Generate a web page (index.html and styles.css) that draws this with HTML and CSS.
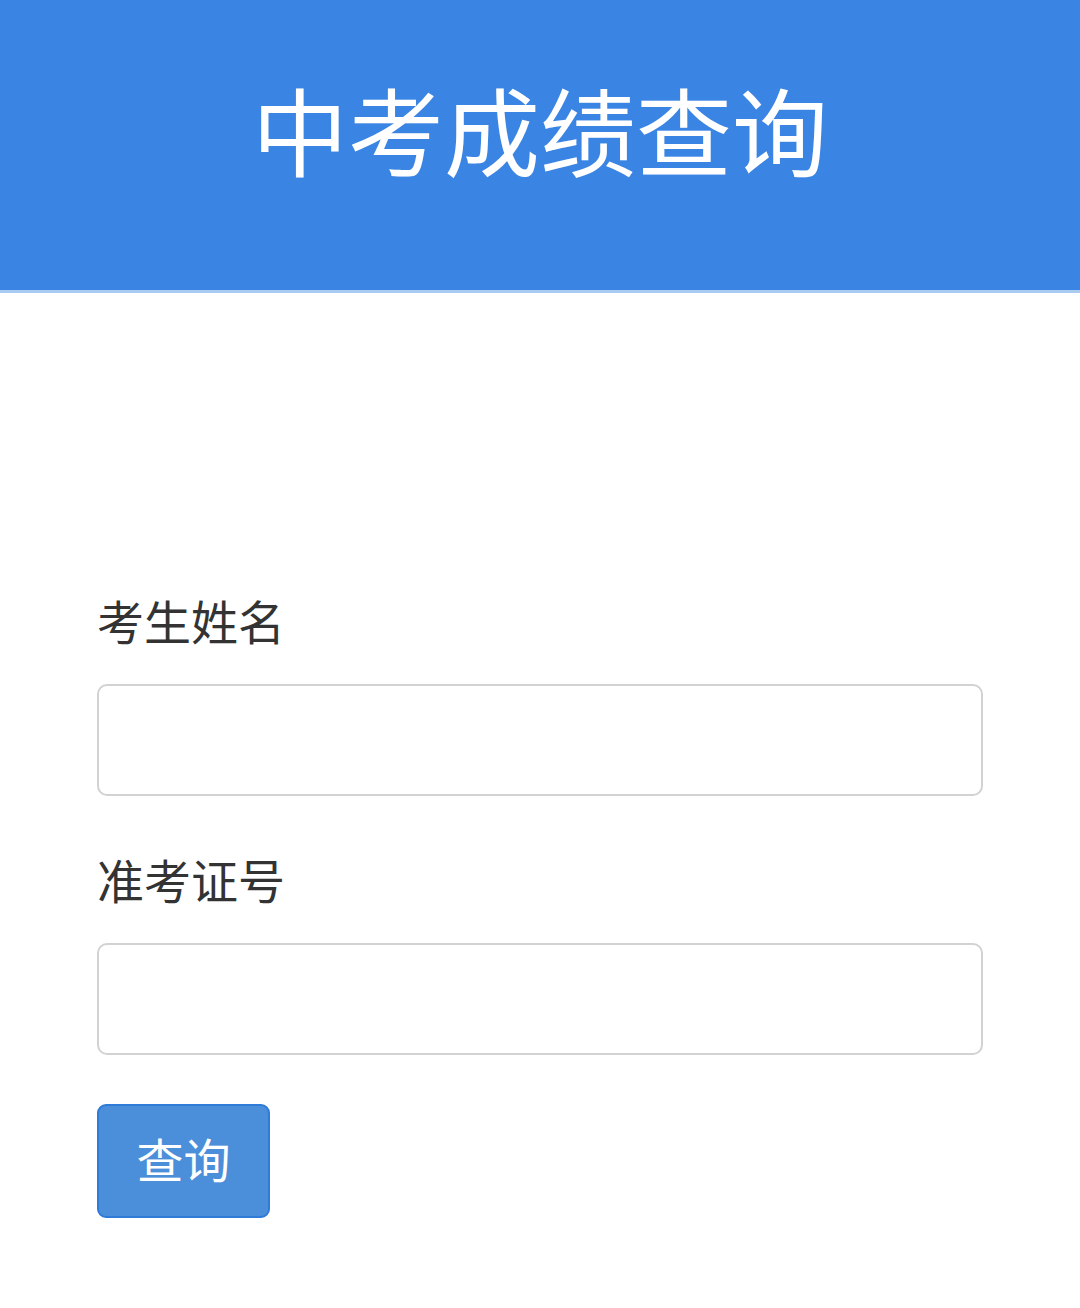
FILE: index.html
```html
<!DOCTYPE html>
<html lang="zh-CN">
<head>
<meta charset="utf-8">
<title>中考成绩查询</title>
<link rel="stylesheet" href="styles.css">
</head>
<body>
<header class="header">
  <h1 class="title">中考成绩查询</h1>
</header>
<main class="form">
  <label class="label" for="name">考生姓名</label>
  <input class="input" id="name" type="text">
  <label class="label label-second" for="num">准考证号</label>
  <input class="input" id="num" type="text">
  <button class="btn" type="button">查询</button>
</main>
</body>
</html>
```

FILE: styles.css
```css
html, body {
  margin: 0;
  padding: 0;
  background: #ffffff;
}
body {
  font-family: "Noto Sans CJK SC", "Noto Sans", sans-serif;
  color: #333333;
}
.header {
  height: 290px;
  background: #3a84e3;
  border-bottom: 3px solid #a9cbf2;
  display: flex;
  align-items: center;
  justify-content: center;
}
.title {
  margin: 0;
  font-size: 96px;
  font-weight: 400;
  line-height: 1;
  color: #ffffff;
  padding-bottom: 34px;
}
.form {
  display: flex;
  flex-direction: column;
  align-items: flex-start;
  margin: 0 97px;
  padding-top: 303px;
}
.label {
  font-size: 47px;
  line-height: 1;
  color: #333333;
  margin-bottom: 41px;
}
.label-second {
  margin-top: 59px;
}
.input {
  box-sizing: border-box;
  width: 886px;
  height: 112px;
  border: 2px solid #d2d2d2;
  border-radius: 10px;
  background: #fff;
  font-size: 40px;
  padding: 0 20px;
  margin: 0;
}
.btn {
  box-sizing: border-box;
  margin-top: 49px;
  width: 173px;
  height: 114px;
  background: #4b8ed9;
  border: 2px solid #2f7bd8;
  border-radius: 9px;
  color: #ffffff;
  font-family: "Noto Sans CJK SC", sans-serif;
  font-size: 47px;
  line-height: 1;
  padding: 0 0 8px 0;
  display: flex;
  align-items: center;
  justify-content: center;
}
```
